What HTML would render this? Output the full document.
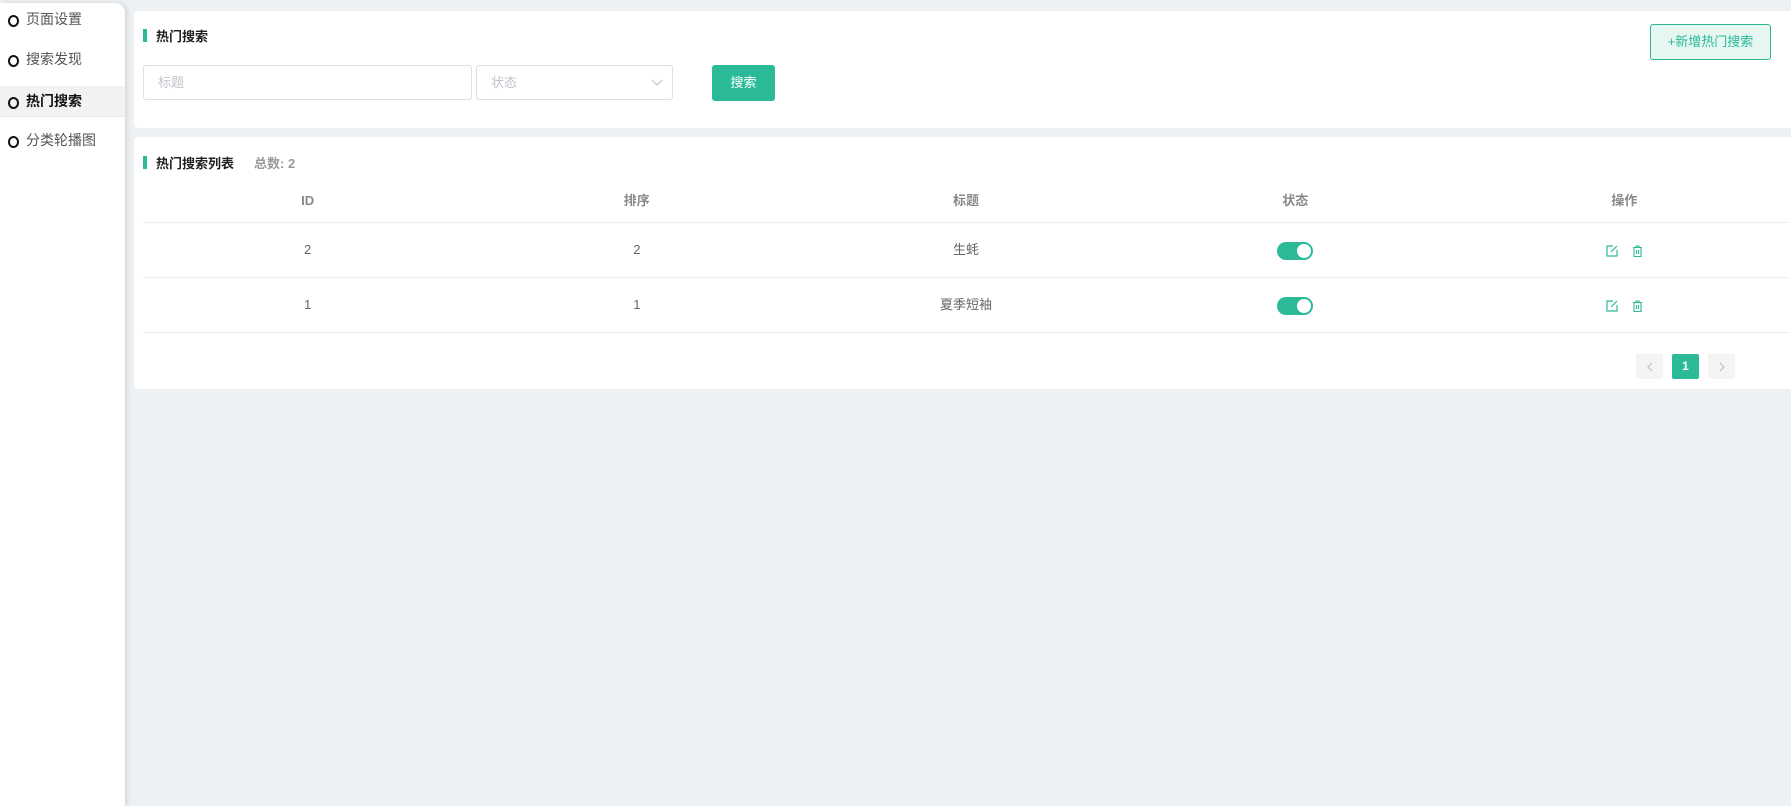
<!DOCTYPE html>
<html><head><meta charset="utf-8"><style>
*{box-sizing:border-box;margin:0;padding:0}
body{width:1791px;height:806px;background:#eef1f4;font-family:"Liberation Sans","Noto Sans CJK SC",sans-serif;position:relative;overflow:hidden;font-size:14px;color:#333}
.side{position:absolute;left:0;top:3px;width:125px;height:803px;background:#fff;border-top-right-radius:10px;box-shadow:2px 0 5px rgba(0,0,0,.12)}
.nav{position:absolute;left:0;width:125px;height:31px;line-height:31px;padding-left:26px;color:#555;font-size:14px}
.nav:before{content:"";position:absolute;left:8px;top:11px;width:7px;height:8px;border:2px solid #111;border-radius:50%}
.nav.act{background:#f2f2f2;color:#111;font-weight:bold;border-bottom:1px solid #e6e6e6}
.card{position:absolute;left:134px;right:0;background:#fff;border-radius:4px 0 0 4px}
.tt{position:absolute;left:9px;font-weight:bold;font-size:13px;color:#222;padding-left:13px}
.tt:before{content:"";position:absolute;left:0;top:3px;width:4px;height:13px;background:#2bba98}
.inp{position:absolute;top:54px;height:35px;border:1px solid #dcdfe6;border-radius:3px;color:#c0c4cc;font-size:13px;line-height:33px;padding-left:14px}
.btn{position:absolute;left:578px;top:54px;width:63px;height:36px;background:#2bba98;border-radius:3px;color:#fff;text-align:center;line-height:36px;font-size:13px}
.add{position:absolute;left:1516px;top:13px;width:121px;height:36px;background:#e6f6f1;border:1px solid #2bba98;border-radius:3px;color:#2bba98;text-align:center;line-height:34px;font-size:13px}
.row{position:absolute;left:9px;width:1646px;display:flex;border-bottom:1px solid #ebeef5}
.row div{flex:1;text-align:center;color:#666;font-size:13px}
.hd div{color:#888;font-weight:bold}
.tg{display:inline-block;width:36px;height:18px;background:#2bba98;border-radius:9px;position:relative;vertical-align:middle}
.tg:after{content:"";position:absolute;right:2px;top:2px;width:14px;height:14px;border-radius:50%;background:#fff}
.pg{position:absolute;top:217px;width:27px;height:25px;background:#f4f4f5;border-radius:2px;color:#c0c4cc;text-align:center;line-height:25px;font-size:12px}
</style></head><body>
<div class="side">
<div class="nav" style="top:1px">页面设置</div>
<div class="nav" style="top:41px">搜索发现</div>
<div class="nav act" style="top:83px">热门搜索</div>
<div class="nav" style="top:122px">分类轮播图</div>
</div>
<div class="card" style="top:11px;height:117px">
<div class="tt" style="top:15px">热门搜索</div>
<div class="inp" style="left:9px;width:329px">标题</div>
<div class="inp" style="left:342px;width:197px">状态<svg style="position:absolute;right:9px;top:13px" width="12" height="8" viewBox="0 0 12 8"><path d="M1 1l5 5 5-5" fill="none" stroke="#c0c4cc" stroke-width="1.2"/></svg></div>
<div class="btn">搜索</div>
<div class="add">+新增热门搜索</div>
</div>
<div class="card" style="top:137px;height:252px">
<div class="tt" style="top:16px">热门搜索列表<span style="color:#999;margin-left:20px">总数: 2</span></div>
<div class="row hd" style="top:49px;height:37px;line-height:30px"><div>ID</div><div>排序</div><div>标题</div><div>状态</div><div>操作</div></div>
<div class="row" style="top:86px;height:55px;line-height:54px"><div>2</div><div>2</div><div>生蚝</div><div><span class="tg"></span></div><div><svg width="12" height="12" viewBox="0 0 12 12" style="vertical-align:middle;margin-right:14px"><path d="M7 1H1v10h10V5M5 7l6-6" fill="none" stroke="#2bba98" stroke-width="1.2"/></svg><svg width="11" height="12" viewBox="0 0 11 12" style="vertical-align:middle"><path d="M1 2.5h9M4 2.5V1h3v1.5M2 2.5v9h7v-9M4.5 5v4M6.5 5v4" fill="none" stroke="#2bba98" stroke-width="1.1"/></svg></div></div>
<div class="row" style="top:141px;height:55px;line-height:54px"><div>1</div><div>1</div><div>夏季短袖</div><div><span class="tg"></span></div><div><svg width="12" height="12" viewBox="0 0 12 12" style="vertical-align:middle;margin-right:14px"><path d="M7 1H1v10h10V5M5 7l6-6" fill="none" stroke="#2bba98" stroke-width="1.2"/></svg><svg width="11" height="12" viewBox="0 0 11 12" style="vertical-align:middle"><path d="M1 2.5h9M4 2.5V1h3v1.5M2 2.5v9h7v-9M4.5 5v4M6.5 5v4" fill="none" stroke="#2bba98" stroke-width="1.1"/></svg></div></div>
<div class="pg" style="left:1502px"><svg width="8" height="10" viewBox="0 0 8 10" style="vertical-align:middle"><path d="M6 1L2 5l4 4" fill="none" stroke="#c0c4cc" stroke-width="1.3"/></svg></div>
<div class="pg" style="left:1538px;background:#2bba98;color:#fff;font-weight:bold">1</div>
<div class="pg" style="left:1574px"><svg width="8" height="10" viewBox="0 0 8 10" style="vertical-align:middle"><path d="M2 1l4 4-4 4" fill="none" stroke="#c0c4cc" stroke-width="1.3"/></svg></div>
</div>
</body></html>
